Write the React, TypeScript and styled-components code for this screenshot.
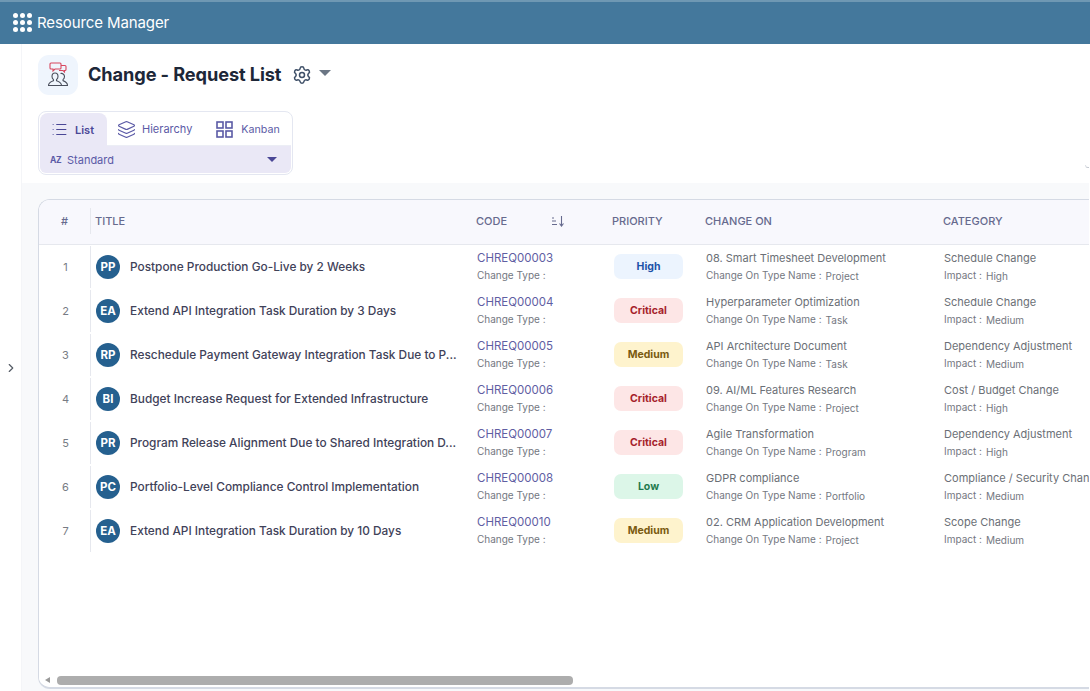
import styled, { createGlobalStyle } from "styled-components";
import { ChevronRight, List, Layers, Settings } from "lucide-react";

const Global = createGlobalStyle`
  html, body {
    margin: 0;
    padding: 0;
    background: #fff;
    font-family: Inter, "Noto Sans", sans-serif;
    overflow: hidden;
  }
  * { box-sizing: border-box; }
`;

const Page = styled.div`
  width: 1090px;
  height: 691px;
  display: flex;
  flex-direction: column;
  overflow: hidden;
`;

const TopBar = styled.header`
  height: 44px;
  flex: none;
  display: flex;
  align-items: center;
  gap: 5px;
  padding: 0 0 2px 13px;
  background: #44789c;
  border-top: 2px solid #6f98b3;
  color: #fff;
`;

const AppGrid = styled.div`
  display: grid;
  grid-template-columns: repeat(3, 5px);
  gap: 2px;
`;

const AppDot = styled.span`
  width: 5px;
  height: 5px;
  border-radius: 50%;
  background: #fff;
`;

const AppName = styled.div`
  font-size: 15px;
  letter-spacing: -0.1px;
`;

const Main = styled.div`
  flex: 1;
  display: flex;
  min-height: 0;
  padding-right: 1px;
`;

const SideRail = styled.aside`
  width: 22px;
  flex: none;
  display: flex;
  align-items: flex-start;
  justify-content: center;
  padding-top: 317px;
  border-right: 1px solid #f4f5f8;
  color: #555c66;
`;

const Content = styled.div`
  flex: 1;
  min-width: 0;
  display: flex;
  flex-direction: column;
`;

const Head = styled.div`
  position: relative;
  height: 139px;
  flex: none;
  padding: 10px 0 0 16px;
`;

const CornerTick = styled.span`
  position: absolute;
  right: 0;
  top: 121px;
  width: 4px;
  height: 3px;
  border-bottom: 1px solid #c4c8d0;
  border-left: 1px solid #dcdfe5;
  border-bottom-left-radius: 3px;
`;

const TitleRow = styled.div`
  display: flex;
  align-items: center;
  height: 41px;
`;

const PageIcon = styled.div`
  width: 40px;
  height: 40px;
  border-radius: 11px;
  background: #eff5fd;
  display: flex;
  align-items: center;
  justify-content: center;
`;

const PageTitle = styled.h1`
  margin: 0 0 2px 10px;
  font-size: 18.2px;
  font-weight: 700;
  color: #1d2738;
  letter-spacing: -0.1px;
`;

const Gear = styled.span`
  display: flex;
  margin-left: 11px;
  color: #3f5068;
`;

const Caret = styled.span<{ $size: number; $color: string }>`
  width: 0;
  height: 0;
  border-left: ${(p) => p.$size}px solid transparent;
  border-right: ${(p) => p.$size}px solid transparent;
  border-top: ${(p) => p.$size}px solid ${(p) => p.$color};
`;

const TitleCaret = styled.span`
  display: flex;
  margin: 0 0 4px 7px;
`;

const ViewBox = styled.div`
  width: 255px;
  height: 64px;
  margin-top: 16px;
  border: 1px solid #e4e7f1;
  border-radius: 8px;
  padding: 1px;
`;

const Tabs = styled.div`
  display: flex;
  height: 33px;
`;

const Tab = styled.div`
  display: flex;
  align-items: center;
  gap: 6px;
  padding: 0 14px 0 10px;
  font-size: 11px;
  color: #5b5aa6;
  border-bottom: 1px solid #eceef5;
`;

const ActiveTab = styled(Tab)`
  width: 67px;
  gap: 7px;
  padding: 0 0 0 11px;
  font-weight: 600;
  color: #4a4796;
  background: #eae8f6;
  border-bottom: none;
  border-radius: 8px 8px 0 0;
`;

const LastTab = styled(Tab)`
  flex: 1;
  gap: 8px;
  padding: 0 0 0 10px;
  font-size: 10.7px;
`;

const SortBar = styled.div`
  height: 27px;
  display: flex;
  align-items: center;
  padding: 0 14px 0 10px;
  background: #eae8f6;
  border-radius: 0 0 6px 6px;
  font-size: 11px;
  color: #5b5aa6;
`;

const AzMark = styled.span`
  font-size: 8.5px;
  font-weight: 700;
  width: 17px;
  letter-spacing: -0.3px;
`;

const SortLabel = styled.span`
  flex: 1;
`;

const Body = styled.div`
  flex: 1;
  min-height: 0;
  background: #f8f9fb;
  padding: 16px 0 2px 16px;
`;

const Card = styled.div`
  position: relative;
  height: 100%;
  background: #fff;
  border: 1px solid #d5dae4;
  border-right: none;
  border-bottom-width: 2px;
  border-radius: 12px 0 0 12px;
  overflow: hidden;
`;

const Columns = "51px 386px 136px 93px 238px 160px";

const HeaderRow = styled.div`
  display: grid;
  grid-template-columns: ${Columns};
  height: 45px;
  padding-bottom: 2px;
  align-items: center;
  background: #f8f8fd;
  border-bottom: 1px solid #e6e8ee;
`;

const HeadCell = styled.div<{ $center?: boolean; $rule?: boolean }>`
  font-size: 11px;
  font-weight: 500;
  color: #666a8e;
  display: flex;
  align-items: center;
  height: 26px;
  padding-left: ${(p) => (p.$rule ? "4px" : "0")};
  justify-content: ${(p) => (p.$center ? "center" : "flex-start")};
  border-left: ${(p) => (p.$rule ? "1px solid #e6e8ee" : "none")};
`;

const CodeHead = styled(HeadCell)`
  justify-content: space-between;
  padding-right: 47px;
`;

const SortIcon = styled.svg`
  width: 14px;
  height: 12px;
`;

const Row = styled.div`
  display: grid;
  grid-template-columns: ${Columns};
  height: 44px;
  align-items: center;
`;

const NumCell = styled.div`
  font-size: 11px;
  color: #777b84;
  text-align: center;
  padding-left: 2px;
`;

const TitleCell = styled.div`
  display: flex;
  align-items: center;
  gap: 10px;
  height: 42px;
  padding-left: 5px;
  border-left: 1px solid #e6e8ee;
`;

const Avatar = styled.div`
  width: 24px;
  height: 24px;
  flex: none;
  border-radius: 50%;
  background: #25608f;
  color: #fff;
  font-size: 11.5px;
  font-weight: 700;
  display: flex;
  align-items: center;
  justify-content: center;
`;

const TitleText = styled.div`
  font-size: 11.85px;
  font-weight: 500;
  color: #3f4259;
  white-space: nowrap;
`;

const Stack = styled.div`
  display: flex;
  flex-direction: column;
  gap: 4px;
  padding-left: 1px;
  white-space: nowrap;
`;

const CodeLink = styled.div`
  font-size: 11.5px;
  line-height: 13px;
  color: #5f5ea3;
`;

const Primary = styled.div`
  font-size: 11px;
  line-height: 13px;
  color: #6b6f76;
`;

const Secondary = styled.div`
  font-size: 10px;
  line-height: 13px;
  color: #74787f;
  display: flex;
  align-items: flex-start;
  gap: 4px;
`;

const SecondaryValue = styled.span`
  margin-top: 1px;
`;

const tones = {
  High: { bg: "#ecf4fe", fg: "#1c52a8" },
  Critical: { bg: "#fde6e6", fg: "#a61f2b" },
  Medium: { bg: "#fef3cd", fg: "#7a5a10" },
  Low: { bg: "#dcf6e8", fg: "#1f7a4d" },
};

type Level = keyof typeof tones;

const Badge = styled.div<{ $level: Level }>`
  width: 69px;
  height: 25px;
  margin: 0 0 2px 2px;
  border-radius: 7px;
  display: flex;
  align-items: center;
  justify-content: center;
  font-size: 10.5px;
  font-weight: 700;
  background: ${(p) => tones[p.$level].bg};
  color: ${(p) => tones[p.$level].fg};
`;

const ScrollTrack = styled.div`
  position: absolute;
  left: 0;
  right: 0;
  bottom: 0;
  height: 14px;
  background: #fff;
  display: flex;
  align-items: center;
  padding-left: 6px;
  gap: 7px;
`;

const ScrollArrow = styled.span`
  width: 0;
  height: 0;
  border-top: 3.5px solid transparent;
  border-bottom: 3.5px solid transparent;
  border-right: 5px solid #9a9a9a;
`;

const ScrollThumb = styled.div`
  width: 516px;
  height: 9px;
  border-radius: 4px;
  background: #adadad;
`;

const rows: {
  initials: string;
  title: string;
  code: string;
  level: Level;
  on: string;
  onType: string;
  category: string;
  impact: string;
}[] = [
  { initials: "PP", title: "Postpone Production Go-Live by 2 Weeks", code: "CHREQ00003", level: "High", on: "08. Smart Timesheet Development", onType: "Project", category: "Schedule Change", impact: "High" },
  { initials: "EA", title: "Extend API Integration Task Duration by 3 Days", code: "CHREQ00004", level: "Critical", on: "Hyperparameter Optimization", onType: "Task", category: "Schedule Change", impact: "Medium" },
  { initials: "RP", title: "Reschedule Payment Gateway Integration Task Due to P...", code: "CHREQ00005", level: "Medium", on: "API Architecture Document", onType: "Task", category: "Dependency Adjustment", impact: "Medium" },
  { initials: "BI", title: "Budget Increase Request for Extended Infrastructure", code: "CHREQ00006", level: "Critical", on: "09. AI/ML Features Research", onType: "Project", category: "Cost / Budget Change", impact: "High" },
  { initials: "PR", title: "Program Release Alignment Due to Shared Integration D...", code: "CHREQ00007", level: "Critical", on: "Agile Transformation", onType: "Program", category: "Dependency Adjustment", impact: "High" },
  { initials: "PC", title: "Portfolio-Level Compliance Control Implementation", code: "CHREQ00008", level: "Low", on: "GDPR compliance", onType: "Portfolio", category: "Compliance / Security Change", impact: "Medium" },
  { initials: "EA", title: "Extend API Integration Task Duration by 10 Days", code: "CHREQ00010", level: "Medium", on: "02. CRM Application Development", onType: "Project", category: "Scope Change", impact: "Medium" },
];

function PeopleIcon() {
  return (
    <svg width="24" height="26" viewBox="0 0 24 26" fill="none">
      <path d="M15 3.5h4a1 1 0 0 1 1 1v3a1 1 0 0 1-1 1h-.5v1.5L17 8.500h-4" stroke="#d8475f" strokeWidth="1.1" />
      <path d="M5 1h9a1 1 0 0 1 1 1v4a1 1 0 0 1-1 1H9l-2 2V7H5a1 1 0 0 1-1-1V2a1 1 0 0 1 1-1z" stroke="#d8475f" strokeWidth="1.1" fill="#eff5fd" />
      <path d="M9 11c-2 0-3 1.500-3 3.500 0 1.500.7 2.500 1.500 3.200v1c-2 .8-5 1.500-5 4.800h13c0-3.300-3-4-5-4.800v-1c.8-.7 1.500-1.700 1.500-3.200 0-2-1-3.500-3-3.500z" stroke="#4a4f5c" strokeWidth="1.1" strokeLinejoin="round" />
      <path d="M14.500 11.500c1.800-.6 4 .8 4 3 0 1.500-.7 2.500-1.500 3.200v1c2 .8 4.500 1.500 4.500 4.800h-5.500" stroke="#4a4f5c" strokeWidth="1.1" strokeLinejoin="round" />
    </svg>
  );
}

function KanbanIcon() {
  return (
    <svg width="17" height="17" viewBox="0 0 17 17" fill="none" stroke="currentColor" strokeWidth="1.6">
      <rect x="1" y="1" width="6" height="6" />
      <rect x="10" y="1" width="6" height="6" />
      <rect x="1" y="10" width="6" height="6" />
      <rect x="10" y="10" width="6" height="6" />
    </svg>
  );
}

export default function App() {
  return (
    <Page>
      <Global />
      <TopBar>
        <AppGrid>
          {Array.from({ length: 9 }).map((_, i) => (
            <AppDot key={i} />
          ))}
        </AppGrid>
        <AppName>Resource Manager</AppName>
      </TopBar>
      <Main>
        <SideRail>
          <ChevronRight size={14} />
        </SideRail>
        <Content>
          <Head>
            <TitleRow>
              <PageIcon>
                <PeopleIcon />
              </PageIcon>
              <PageTitle>Change - Request List</PageTitle>
              <Gear>
                <Settings size={20} strokeWidth={1.8} />
              </Gear>
              <TitleCaret>
                <Caret $size={6} $color="#6b7684" />
              </TitleCaret>
            </TitleRow>
            <ViewBox>
              <Tabs>
                <ActiveTab>
                  <List size={17} strokeWidth={1.6} />
                  List
                </ActiveTab>
                <Tab>
                  <Layers size={19} strokeWidth={1.5} />
                  Hierarchy
                </Tab>
                <LastTab>
                  <KanbanIcon />
                  Kanban
                </LastTab>
              </Tabs>
              <SortBar>
                <AzMark>AZ</AzMark>
                <SortLabel>Standard</SortLabel>
                <Caret $size={5} $color="#4a4796" />
              </SortBar>
            </ViewBox>
            <CornerTick />
          </Head>
          <Body>
            <Card>
              <HeaderRow>
                <HeadCell $center>#</HeadCell>
                <HeadCell $rule>TITLE</HeadCell>
                <CodeHead>
                  CODE
                  <SortIcon viewBox="0 0 14 12" fill="none" stroke="#666a8e" strokeWidth="1.1">
                    <path d="M1 3h2M1 6h4M1 9.500h5M10.500 1v10M8.500 8.500l2 2.500 2-2.500" />
                  </SortIcon>
                </CodeHead>
                <HeadCell>PRIORITY</HeadCell>
                <HeadCell>CHANGE ON</HeadCell>
                <HeadCell>CATEGORY</HeadCell>
              </HeaderRow>
              {rows.map((r, i) => (
                <Row key={r.code}>
                  <NumCell>{i + 1}</NumCell>
                  <TitleCell>
                    <Avatar>{r.initials}</Avatar>
                    <TitleText>{r.title}</TitleText>
                  </TitleCell>
                  <Stack>
                    <CodeLink>{r.code}</CodeLink>
                    <Secondary>Change Type :</Secondary>
                  </Stack>
                  <Badge $level={r.level}>{r.level}</Badge>
                  <Stack>
                    <Primary>{r.on}</Primary>
                    <Secondary>
                      Change On Type Name : <SecondaryValue>{r.onType}</SecondaryValue>
                    </Secondary>
                  </Stack>
                  <Stack>
                    <Primary>{r.category}</Primary>
                    <Secondary>
                      Impact : <SecondaryValue>{r.impact}</SecondaryValue>
                    </Secondary>
                  </Stack>
                </Row>
              ))}
              <ScrollTrack>
                <ScrollArrow />
                <ScrollThumb />
              </ScrollTrack>
            </Card>
          </Body>
        </Content>
      </Main>
    </Page>
  );
}
